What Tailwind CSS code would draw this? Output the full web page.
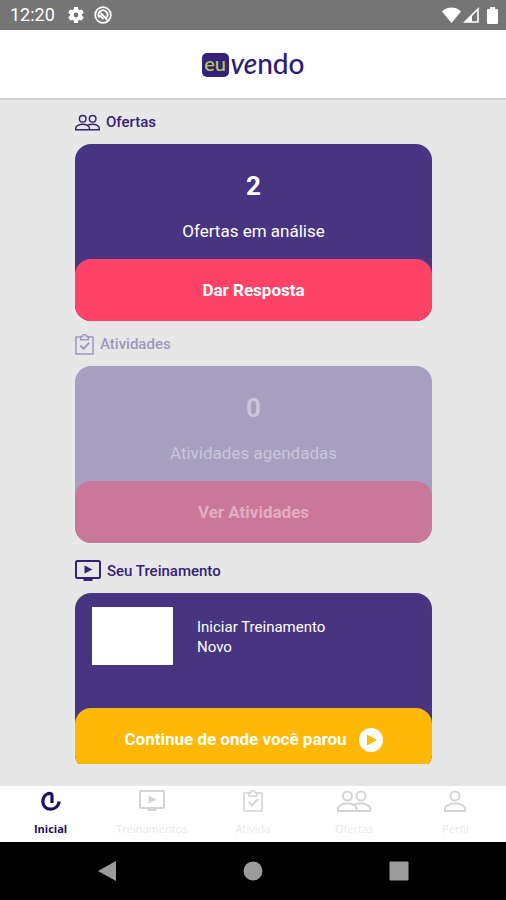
<!DOCTYPE html>
<html lang="pt-BR">
<head>
  <meta charset="UTF-8">
  <meta name="viewport" content="width=device-width, initial-scale=1">
  <title>Eu Vendo</title>
  <script src="https://cdn.jsdelivr.net/npm/@tailwindcss/browser@4"></script>
</head>
<body class="bg-[#e7e7e7] font-['Roboto',sans-serif]">
  <svg class="hidden">
    <symbol id="icon-people" viewBox="0 0 34 22" fill="none" stroke="currentColor" stroke-width="2">
      <circle cx="10.500" cy="6" r="4.500"/>
      <circle cx="24" cy="6" r="4.500"/>
      <path d="M1 21v-2.500c0-3 5-5 9.500-5s9 2 9 5V21zM17 14.800c2-.9 4.500-1.300 7-1.300 4.500 0 9 2 9 5V21H19.500"/>
    </symbol>
    <symbol id="icon-clipboard" viewBox="0 0 20 22" fill="none" stroke="currentColor" stroke-width="1.600">
      <path d="M6 3H1v18h18V3h-5"/>
      <path d="M6 2.500h2a2 2 0 0 1 4 0h2V6H6z"/>
      <path d="M5.500 12l3.500 3.500 6-6.500" stroke-width="2"/>
    </symbol>
    <symbol id="icon-video" viewBox="0 0 26 22">
      <rect x="1" y="1" width="24" height="17" rx="1.500" fill="none" stroke="currentColor" stroke-width="2"/>
      <path d="M9.500 5.500v8l8-4zM8.500 18.500h9V21h-9z" fill="currentColor"/>
    </symbol>
    <symbol id="icon-person" viewBox="0 0 22 22" fill="none" stroke="currentColor" stroke-width="2">
      <circle cx="11" cy="6" r="4.500"/>
      <path d="M1 21v-2.500c0-3 5.500-5 10-5s10 2 10 5V21z"/>
    </symbol>
  </svg>

  <div class="flex h-screen flex-col">
    <!-- Barra de estado -->
    <div class="flex h-[30px] shrink-0 items-center bg-[#757575] pl-[10px] pr-2 text-white">
      <span class="text-lg leading-5">12:20</span>
      <svg class="ml-[13px] size-4" viewBox="2 2 20 20" fill="currentColor">
        <path fill-rule="evenodd" d="M19.400 13c.1-.7.1-1.300 0-2l2.100-1.600a.5.5 0 0 0 .1-.6l-2-3.500a.5.5 0 0 0-.6-.2l-2.500 1a7 7 0 0 0-1.700-1L14.500 2.400a.5.5 0 0 0-.5-.4h-4a.5.5 0 0 0-.5.400L9.200 5.100a7 7 0 0 0-1.700 1l-2.500-1a.5.5 0 0 0-.6.200l-2 3.500a.5.5 0 0 0 .1.600L4.600 11c-.1.700-.1 1.300 0 2l-2.100 1.600a.5.5 0 0 0-.1.600l2 3.500c.1.200.4.300.6.200l2.500-1a7 7 0 0 0 1.700 1l.3 2.700c0 .2.300.4.500.4h4c.2 0 .5-.2.500-.4l.3-2.700a7 7 0 0 0 1.700-1l2.500 1c.2.100.5 0 .6-.2l2-3.500a.5.5 0 0 0-.1-.6zM12 15a3 3 0 1 1 0-6 3 3 0 0 1 0 6z"/>
      </svg>
      <svg class="ml-[10px] size-[18px]" viewBox="0 0 18 18" fill="none" stroke="currentColor" stroke-width="1.800">
        <circle cx="9" cy="9" r="7.800"/>
        <path d="M5.400 11.500a4.500 4.500 0 1 1 7.200 0M6.500 7l7 7M5.500 9.500l4 3.500"/>
      </svg>
      <svg class="ml-auto h-[16px] w-[19px]" viewBox="0 0 19 16" fill="currentColor"><path d="M0 4.500C5-1 14-1 19 4.500L9.500 16z"/></svg>
      <svg class="ml-[2px] size-[16px]" viewBox="0 0 16 16"><path d="M15 2v13H2z" fill="none" stroke="currentColor" stroke-width="1.600"/><path d="M9 8v7H2z" fill="currentColor"/></svg>
      <svg class="ml-2 h-[17px] w-[11px]" viewBox="0 0 11 17" fill="currentColor"><path d="M3 0h5v2h2q1 0 1 1v13q0 1-1 1H1q-1 0-1-1V3q0-1 1-1h2z"/></svg>
    </div>

    <!-- Logo -->
    <header class="flex h-[70px] shrink-0 items-center justify-center border-b-2 border-[#cfcfcf] bg-white pt-[2px] font-['Lato',sans-serif] text-[#2c1a78]">
      <span class="flex h-6 w-[27px] items-center justify-center rounded-[5px] bg-[#35207a] pb-1 text-xl font-medium leading-5 text-[#b4cc55]">eu</span>
      <span class="ml-[2px] pb-1 text-[28px] font-medium leading-7"><i>ve</i>ndo</span>
    </header>

    <!-- Conteúdo -->
    <main class="mb-[22px] min-h-0 flex-1 overflow-hidden pl-[75px] pr-[74px]">
      <section class="pt-[11px]">
        <h2 class="flex h-[22px] items-center gap-[6px] text-[15px] font-medium text-[#35207a]">
          <svg class="h-[17px] w-[25px]"><use href="#icon-people"/></svg>Ofertas
        </h2>
        <div class="mt-[11px] rounded-2xl bg-[#473582] text-center text-white">
          <div class="flex h-[115px] flex-col items-center pt-[26px]">
            <strong class="text-[26px] leading-8 font-bold">2</strong>
            <span class="mt-[17px] text-[17px] leading-6">Ofertas em análise</span>
          </div>
          <button class="h-[62px] w-full rounded-2xl bg-[#ff4367] pt-[2px] text-[17px] font-bold">Dar Resposta</button>
        </div>
      </section>

      <section class="pt-3">
        <h2 class="flex h-[22px] items-center gap-[6px] text-[15px] font-medium text-[#a097bd]">
          <svg class="h-[21px] w-[19px]"><use href="#icon-clipboard"/></svg>Atividades
        </h2>
        <div class="mt-[11px] rounded-2xl bg-[#a69fc0] text-center text-[#cbc5db]">
          <div class="flex h-[115px] flex-col items-center pt-[26px]">
            <strong class="text-[26px] leading-8 font-bold">0</strong>
            <span class="mt-[17px] text-[17px] leading-6">Atividades agendadas</span>
          </div>
          <button class="h-[62px] w-full rounded-2xl bg-[#ca7899] pt-[2px] text-[17px] font-bold text-[#e3adc2]">Ver Atividades</button>
        </div>
      </section>

      <section class="pt-[17px]">
        <h2 class="flex h-[22px] items-center gap-[6px] text-[15px] font-medium text-[#35207a]">
          <svg class="h-[22px] w-[26px]"><use href="#icon-video"/></svg>Seu Treinamento
        </h2>
        <div class="mt-[11px] rounded-2xl bg-[#473582] text-white">
          <div class="flex h-[115px] gap-6 px-[17px] pt-[14px]">
            <div class="h-[58px] w-[81px] bg-white"></div>
            <p class="pt-[10px] text-[15px] leading-5">Iniciar Treinamento<br>Novo</p>
          </div>
          <button class="flex h-[62px] w-full items-center justify-center gap-3 rounded-2xl bg-[#ffb805] pt-[2px] text-[17px] font-bold">
            Continue de onde você parou
            <svg class="size-6" viewBox="0 0 24 24"><circle cx="12" cy="12" r="12" fill="#fff"/><path d="M8 6.500v11l10-5.500z" fill="#ffb805"/></svg>
          </button>
        </div>
      </section>
    </main>

    <!-- Abas -->
    <nav class="grid h-[56px] shrink-0 grid-cols-5 bg-white pt-1 text-center font-['Open_Sans',sans-serif] text-[11px] leading-4 text-[#e8e8e8]">
      <a href="#" class="flex flex-col items-center gap-[9px] font-bold text-[#1d1060]">
        <svg class="h-[22px] w-[20px]" viewBox="0 0 20 22" fill="none" stroke="currentColor" stroke-width="3.200"><path d="M8.500 3.500C4.500 3.500 1.800 7.500 1.800 11.500c0 4.500 3.500 7.700 7.700 7.700 4.500 0 8-3 8.700-7.700M6 4.200C8.500 2.800 11 3.300 11 5.800V13"/></svg>
        Inicial
      </a>
      <a href="#" class="flex flex-col items-center gap-[9px]">
        <svg class="h-[22px] w-[26px] text-[#d4d4d4]"><use href="#icon-video"/></svg>
        Treinamentos
      </a>
      <a href="#" class="flex flex-col items-center gap-[9px]">
        <svg class="h-[22px] w-[20px] text-[#d4d4d4]"><use href="#icon-clipboard"/></svg>
        Ativida
      </a>
      <a href="#" class="flex flex-col items-center gap-[9px]">
        <svg class="h-[22px] w-[34px] text-[#d4d4d4]"><use href="#icon-people"/></svg>
        Ofertas
      </a>
      <a href="#" class="flex flex-col items-center gap-[9px]">
        <svg class="h-[22px] w-[22px] text-[#d4d4d4]"><use href="#icon-person"/></svg>
        Perfil
      </a>
    </nav>

    <!-- Botões do sistema -->
    <div class="flex h-[58px] shrink-0 items-center justify-center gap-[126px] bg-black text-[#9b9b9b]">
      <button aria-label="Voltar"><svg class="size-5" viewBox="0 0 20 20" fill="currentColor"><path d="M19 0v20L1 10z"/></svg></button>
      <button aria-label="Início"><svg class="size-5" viewBox="0 0 20 20" fill="currentColor"><circle cx="10" cy="10" r="9.500"/></svg></button>
      <button aria-label="Recentes"><svg class="size-5" viewBox="0 0 20 20" fill="currentColor"><rect x=".5" y=".5" width="19" height="19" rx="1"/></svg></button>
    </div>
  </div>
</body>
</html>
